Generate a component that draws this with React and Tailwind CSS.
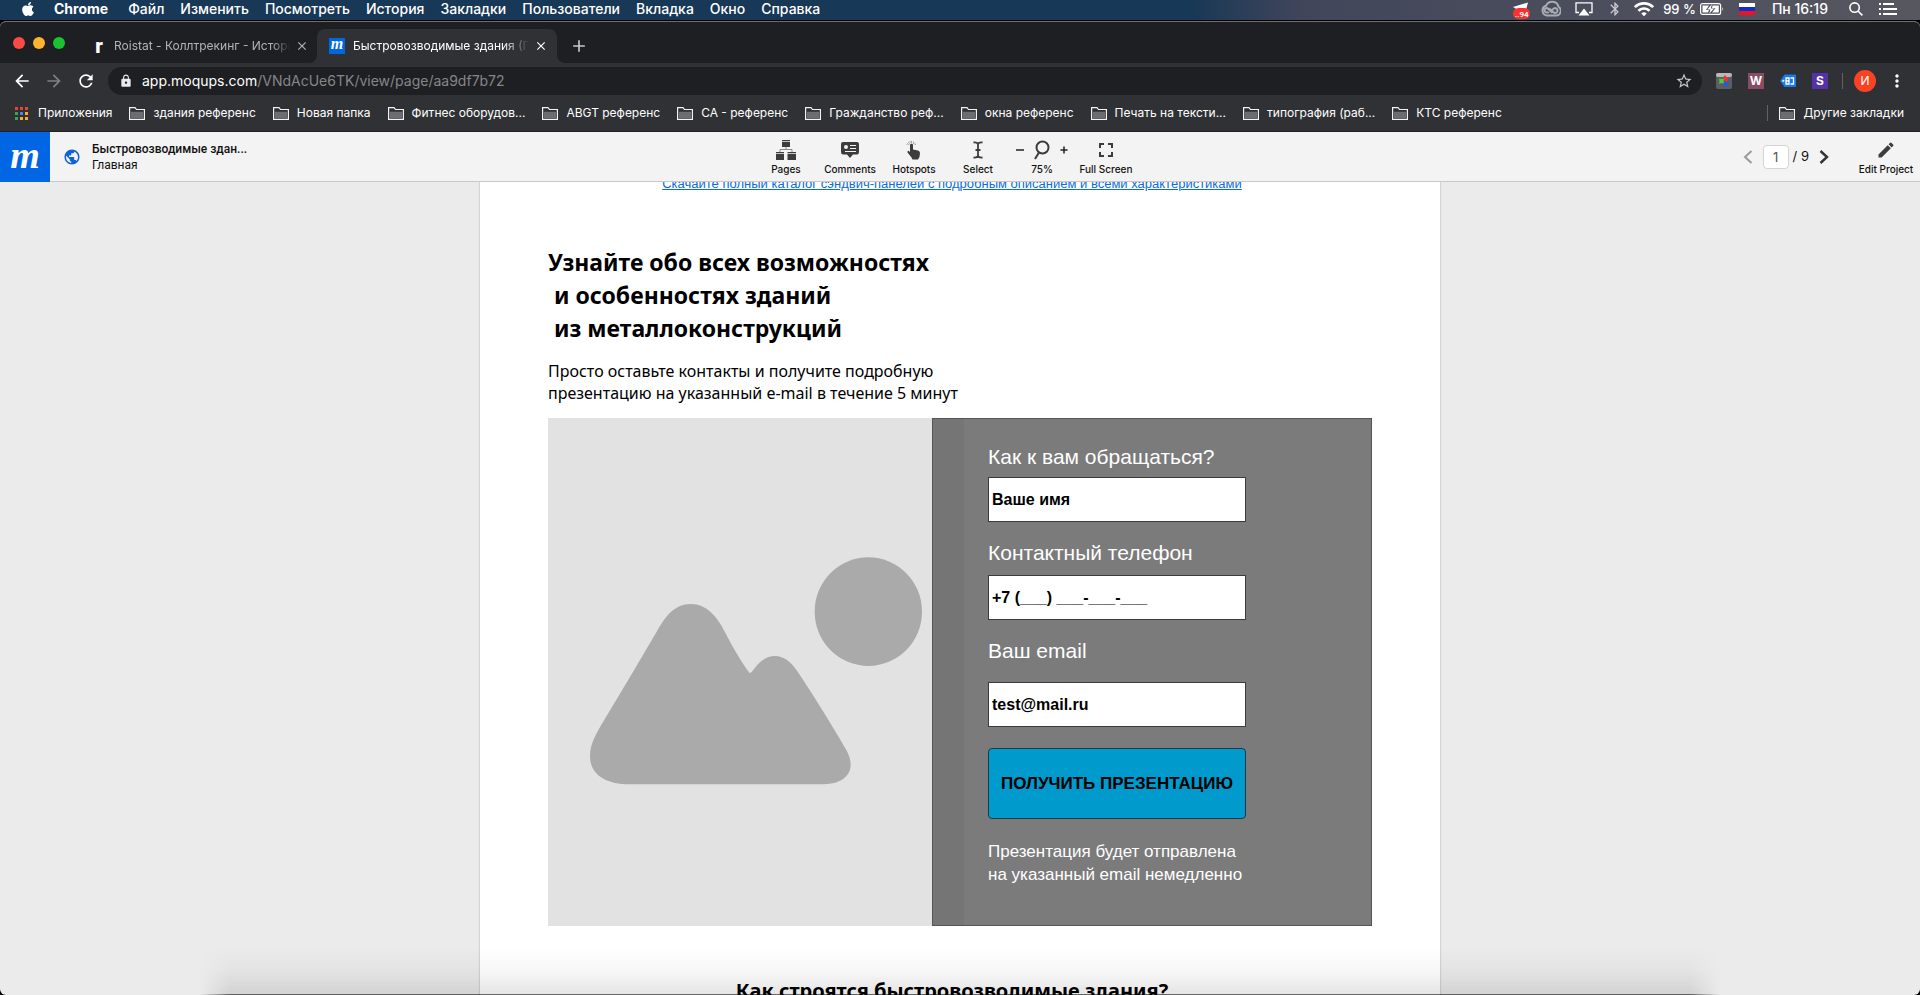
import React from 'react';
import { FaApple } from 'react-icons/fa';
import {
  MdAdd,
  MdArrowBack,
  MdArrowForward,
  MdBluetooth,
  MdClose,
  MdEdit,
  MdLock,
  MdMoreVert,
  MdPublic,
  MdRefresh,
  MdStarBorder,
  MdWifi,
} from 'react-icons/md';

const MENU = ['Файл', 'Изменить', 'Посмотреть', 'История', 'Закладки', 'Пользователи', 'Вкладка', 'Окно', 'Справка'];

const BOOKMARKS = [
  'здания референс',
  'Новая папка',
  'Фитнес оборудов...',
  'ABGT референс',
  'CA - референс',
  'Гражданство реф...',
  'окна референс',
  'Печать на тексти...',
  'типография (раб...',
  'КТС референс',
];

const APP_COLORS = [
  'bg-[#ea4335]', 'bg-[#ea4335]', 'bg-[#ea4335]',
  'bg-[#34a853]', 'bg-[#4285f4]', 'bg-[#f9ab2d]',
  'bg-[#34a853]', 'bg-[#f9ab2d]', 'bg-[#f9ab2d]',
];

const MenuBar = () => (
  <header className="h-5 pb-0.5 shrink-0 flex items-center justify-between pl-5 pr-[23px] text-white text-sm leading-5 bg-linear-to-r from-[#173856] from-62% via-[#41465a] via-68% to-[#57575f]">
    <nav className="flex items-center gap-4 font-medium">
      <FaApple className="w-4 h-4 mr-0.5" />
      <a href="#chrome" className="font-bold mr-1">Chrome</a>
      {MENU.map((item) => (
        <a key={item} href="#menu">{item}</a>
      ))}
    </nav>
    <div className="flex items-center">
      <svg className="w-[18px] h-5 mr-[11px]" viewBox="0 0 18 20">
        <path d="M1 8L16 3.500L14 11H6Z" fill="#fff" />
        <rect x="1" y="9" width="17" height="11" rx="5.5" fill="#f9322f" />
        <text x="3" y="17.5" fontSize="8" fontWeight="600" fill="#fff" fontFamily="Roboto, sans-serif">..94</text>
      </svg>
      <svg className="w-5 h-5 mr-[14px]" viewBox="0 0 20 20" fill="none" stroke="#a9abb3" strokeWidth="2">
        <path d="M5.8 16.5A5 5 0 0 1 5 6.8A6.6 6.6 0 0 1 17.6 8A4.6 4.6 0 0 1 15 16.5H5.8Z" />
        <path d="M11.5 13.8L6.5 9.2A2.2 2.2 0 0 0 4.2 12.8C5 13.9 7 13.7 7.8 12.8" />
        <path d="M8.2 9.5L13.2 13.8A2.4 2.4 0 1 0 12.8 9.5C11.6 10.3 11 11 10.5 11.6" />
      </svg>
      <svg className="w-[18px] h-4 mr-[14px]" viewBox="0 0 18 16">
        <path d="M4 11.5H1V1.8H17V11.5H14" fill="none" stroke="#fff" strokeWidth="1.3" />
        <path d="M9 7.5L14.5 14.5H3.5Z" fill="#fff" />
      </svg>
      <MdBluetooth className="w-4 h-4 mr-2.5 text-[#c9c9ce]" />
      <MdWifi className="w-[22px] h-[22px] mr-2" />
      <span className="text-[13px] font-medium mr-1">99 %</span>
      <svg className="w-6 h-3 mr-[15px]" viewBox="0 0 24 12">
        <rect x=".6" y=".6" width="20" height="10.8" rx="2" fill="none" stroke="#fff" strokeWidth="1.2" />
        <path d="M2.5 2.5H9L6 7H9L8 9.5H2.5ZM12.5 2.5H18.8V9.5H12L15.5 5.2H12Z" fill="#fff" />
        <path d="M11.8 1.2L7.3 6.4H10.4L9.2 10.8L14 5.5H10.8Z" fill="#fff" />
        <path d="M22 4Q23.5 6 22 8Z" fill="#fff" />
      </svg>
      <span className="w-4 h-3 mr-[17px] flex flex-col" aria-hidden="true">
        <span className="flex-1 bg-white" />
        <span className="flex-1 bg-[#0c2fd0]" />
        <span className="flex-1 bg-[#f5101b]" />
      </span>
      <span className="font-medium mr-[21px]">Пн 16:19</span>
      <svg className="w-[14px] h-[14px] mr-4" viewBox="0 0 14 14" fill="none" stroke="#fff" strokeWidth="1.6">
        <circle cx="5.6" cy="5.6" r="4.7" />
        <path d="M9.2 9.2L13.4 13.4" />
      </svg>
      <svg className="w-[18px] h-3" viewBox="0 0 18 12" stroke="#fff" strokeWidth="1.8">
        <path d="M0 1H2M4 1H15M0 6H2M4 6H18M0 11H2M4 11H18" />
      </svg>
    </div>
  </header>
);

// moqups favicon and app logo share this mark
const LogoMark = ({ className }) => (
  <span
    className={`flex items-center justify-center bg-[#0066e4] text-white font-bold italic font-['Liberation_Serif',serif] ${className}`}
  >
    m
  </span>
);

const TabStrip = () => (
  <div className="h-[41px] flex items-end bg-[#1e1f22] pl-[13px] text-xs">
    <div className="flex gap-2 self-center h-3 mr-[26px]">
      <span className="w-3 h-3 rounded-full bg-[#fc4a48]" />
      <span className="w-3 h-3 rounded-full bg-[#fdb32f]" />
      <span className="w-3 h-3 rounded-full bg-[#19c332]" />
    </div>
    <div className="w-[221px] h-[34px] flex items-center text-[#b0b3b8]">
      <span className="w-4 text-center text-white text-xl leading-4 font-black font-['Roboto',sans-serif]">r</span>
      <span className="ml-[7px] w-44 whitespace-nowrap overflow-hidden mask-r-from-90%">Roistat - Коллтрекинг - История</span>
      <button type="button" aria-label="Закрыть вкладку" className="ml-[5px]">
        <MdClose className="w-3.5 h-3.5" />
      </button>
    </div>
    <div className="relative w-60 h-[34px] ml-[5px] flex items-center pl-3 rounded-t-lg bg-[#303135] text-white">
      <svg className="absolute bottom-0 -left-2 w-2 h-2" viewBox="0 0 8 8"><path d="M8 0V8H0A8 8 0 0 0 8 0Z" fill="#303135" /></svg>
      <svg className="absolute bottom-0 -right-2 w-2 h-2" viewBox="0 0 8 8"><path d="M0 0V8H8A8 8 0 0 1 0 0Z" fill="#303135" /></svg>
      <LogoMark className="w-4 h-4 text-base leading-4 pb-1" />
      <span className="ml-2 w-44 whitespace-nowrap overflow-hidden mask-r-from-85%">Быстровозводимые здания (Главная)</span>
      <button type="button" aria-label="Закрыть вкладку" className="ml-[5px]">
        <MdClose className="w-3.5 h-3.5" />
      </button>
    </div>
    <button type="button" aria-label="Новая вкладка" className="h-[34px] ml-3 text-[#c4c7cb]">
      <MdAdd className="w-5 h-5" />
    </button>
  </div>
);

const AddressBar = () => (
  <div className="h-9 flex items-center pl-3 pr-[13px] bg-[#303135] text-white">
    <button type="button" aria-label="Назад"><MdArrowBack className="w-5 h-5" /></button>
    <button type="button" aria-label="Вперёд" className="ml-3 text-[#7d7e82]"><MdArrowForward className="w-5 h-5" /></button>
    <button type="button" aria-label="Обновить" className="ml-3"><MdRefresh className="w-5 h-5" /></button>
    <div className="flex-1 h-7 ml-3 flex items-center rounded-full bg-[#1e1f22] pl-[11px] pr-[9px] text-sm">
      <MdLock className="w-[14px] h-[14px] mr-[9px] text-[#e8eaed]" />
      <span>app.moqups.com</span>
      <span className="text-[#85868a]">/VNdAcUe6TK/view/page/aa9df7b72</span>
      <MdStarBorder className="w-[18px] h-[18px] ml-auto text-[#c4c7cb]" />
    </div>
    <div className="flex items-center gap-4 ml-[14px]">
      <svg className="w-4 h-4" viewBox="0 0 16 16">
        <rect width="16" height="16" rx="2" fill="#5c5f62" />
        <rect width="16" height="4" rx="2" fill="#b8babb" />
        <path d="M9 2L10.500 4L13 4.500L11.500 6.500L11 9L8.500 7.500L6.500 5Z" fill="#f2323a" />
        <path d="M3 5.500L5.500 6L8 5.500L7.500 8L8 10.500L5.500 10L3 11L3.500 8.500Z" fill="#4fc93d" />
        <path d="M9.500 8L11 9.500L13.500 10L12 11.500L11.500 14L9.500 12.500L7 13L8 10.500Z" fill="#1e5be0" />
      </svg>
      <span className="w-4 h-4 bg-[#8b4a66] text-center text-xs leading-4 font-bold">W</span>
      <svg className="w-4 h-4" viewBox="0 0 16 16">
        <path d="M4.500 1.500H15Q16 1.500 16 2.500V13Q16 14 15 14H4.500L0 8Z" fill="#1b78e8" />
        <circle cx="3.300" cy="7.800" r="1.100" fill="#fff" />
        <path d="M6 5H9V11H6ZM10.500 5H13.500V11H10.500M6 8H9" fill="none" stroke="#fff" strokeWidth="1.300" />
      </svg>
      <span className="w-4 h-4 bg-[#5632a8] text-center text-xs leading-4 font-bold">S</span>
    </div>
    <span className="w-px h-4 bg-[#606165] ml-[14px]" />
    <span className="w-[22px] h-[22px] ml-[11px] rounded-full bg-[#fb4223] text-center text-xs leading-[22px]">И</span>
    <button type="button" aria-label="Меню" className="ml-[11px]"><MdMoreVert className="w-5 h-5" /></button>
  </div>
);

const Bookmark = ({ title }) => (
  <a href="#bookmark" className="flex items-center gap-2 whitespace-nowrap">
    <svg className="w-4 h-[13px]" viewBox="0 0 16 13">
      <path d="M.6 12.400V.6H6L7.500 2.500H15.400V12.400Z" fill="none" stroke="#f1f3f4" strokeWidth="1.200" />
      <path d="M1.800 4.800H14.200V11.200H1.800Z" fill="#6c6d70" />
    </svg>
    {title}
  </a>
);

const BookmarksBar = () => (
  <div className="h-[33px] pb-[4px] flex items-center gap-[17px] pl-[15px] pr-4 bg-[#303135] border-b border-[#231f26] text-white text-xs">
    <a href="#apps" className="flex items-center gap-[10px]">
      <span className="grid grid-cols-3 gap-0.5">
        {APP_COLORS.map((color, i) => (
          <span key={i} className={`w-[3px] h-[3px] ${color}`} />
        ))}
      </span>
      Приложения
    </a>
    {BOOKMARKS.map((title) => (
      <Bookmark key={title} title={title} />
    ))}
    <span className="ml-auto flex items-center gap-[11px]">
      <span className="w-px h-4 bg-[#606165]" />
      <Bookmark title="Другие закладки" />
    </span>
  </div>
);

const ToolButton = ({ label, children }) => (
  <button type="button" className="w-16 flex flex-col items-center whitespace-nowrap">
    <span className="h-[22px] flex items-center">{children}</span>
    <span className="mt-px text-[10px] leading-[14px] font-medium">{label}</span>
  </button>
);

const ProjectHeader = () => (
  <header className="h-[50px] shrink-0 flex items-stretch bg-[#f3f3f3] border-b border-[#c9c9c9] text-[#111]">
    <div className="flex-1 flex items-center">
      <LogoMark className="w-[50px] h-[50px] text-[38px] leading-none pb-1" />
      <MdPublic className="w-[18px] h-[18px] ml-[13px] text-[#0f62dc]" />
      <div className="ml-[11px] text-xs leading-4 font-['Roboto',sans-serif]">
        <p className="font-medium">Быстровозводимые здан...</p>
        <p>Главная</p>
      </div>
    </div>
    <nav className="flex pt-[7px] pr-[26px]">
      <ToolButton label="Pages">
        <svg className="w-5 h-5" viewBox="0 0 20 20" fill="#3c3c3c">
          <path d="M6 0H14V1.300H6ZM6 2H14V7H6ZM0 12H8V13.300H0ZM0 14H8V20H0ZM11.500 12H20V13.300H11.500ZM11.500 14H20V20H11.500Z" />
          <path d="M10 7V9.500M4 12V9.500H16V12" fill="none" stroke="#8a8a8a" />
        </svg>
      </ToolButton>
      <ToolButton label="Comments">
        <svg className="w-[18px] h-[18px]" viewBox="0 0 18 18">
          <path d="M2 1H16Q18 1 18 3V11Q18 13.500 16 13.500H12L9 17L6 13.500H2Q0 13.500 0 11V3Q0 1 2 1Z" fill="#3c3c3c" />
          <circle cx="5" cy="6" r="2" fill="#f3f3f3" />
          <path d="M9 4.500H15M9 7.500H15M4 10.500H15" stroke="#f3f3f3" />
        </svg>
      </ToolButton>
      <ToolButton label="Hotspots">
        <svg className="w-4 h-5" viewBox="0 0 16 20">
          <path d="M4 4.500Q5.500 3 7 4.500V9.500L12 10.500Q14 11 14 13L13.500 17L12 19.500H6.500L5.500 17.500L1.500 12.500Q1 10.800 2.500 10.800L4 12Z" fill="#3c3c3c" />
          <path d="M1 4.500A4.500 4.500 0 0 1 9.500 4.500M2.800 4.500A2.800 2.800 0 0 1 8 4.500" fill="none" stroke="#5a5a5a" strokeDasharray="1 1.500" />
        </svg>
      </ToolButton>
      <ToolButton label="Select">
        <svg className="w-[10px] h-[18px]" viewBox="0 0 10 18" fill="none" stroke="#3c3c3c" strokeWidth="1.800">
          <path d="M.5 1.500Q4 1 5 3Q6 1 9.500 1.500M.5 16.500Q4 17 5 15Q6 17 9.500 16.500M5 3V15M2.500 9H7.500" />
        </svg>
      </ToolButton>
      <div className="w-16 flex flex-col items-center">
        <div className="h-[22px] flex items-center gap-2 text-[#222]">
          <button type="button" aria-label="Уменьшить">
            <svg className="w-2.5 h-2.5" viewBox="0 0 10 10"><path d="M1 5H9" stroke="currentColor" strokeWidth="1.500" /></svg>
          </button>
          <svg className="w-[18px] h-5" viewBox="0 0 18 20" fill="none" stroke="#3c3c3c" strokeWidth="2">
            <circle cx="9.500" cy="7.500" r="6" />
            <path d="M6 12.500L2 19" />
          </svg>
          <button type="button" aria-label="Увеличить">
            <svg className="w-2.5 h-2.5" viewBox="0 0 10 10"><path d="M1.500 5H8.500M5 1.500V8.500" stroke="currentColor" strokeWidth="1.500" /></svg>
          </button>
        </div>
        <span className="mt-px text-[10px] leading-[14px] font-medium">75%</span>
      </div>
      <ToolButton label="Full Screen">
        <svg className="w-[14px] h-[14px]" viewBox="0 0 14 14" fill="none" stroke="#3c3c3c" strokeWidth="2">
          <path d="M1 5V1H5M9 1H13V5M13 9V13H9M5 13H1V9" />
        </svg>
      </ToolButton>
    </nav>
    <div className="flex-1 flex items-center justify-end pr-0.5">
      <button type="button" aria-label="Предыдущая страница" className="text-[#9a9a9a]">
        <svg className="w-2.5 h-3.5" viewBox="0 0 10 14"><path d="M8.500 1L2 7L8.500 13" fill="none" stroke="currentColor" strokeWidth="2" /></svg>
      </button>
      <input
        type="text"
        aria-label="Страница"
        defaultValue="1"
        className="w-[26px] h-6 ml-2.5 rounded border border-[#d4d4d4] bg-white text-center text-[13px] text-[#555]"
      />
      <span className="ml-1 text-[13px]">/ 9</span>
      <button type="button" aria-label="Следующая страница" className="ml-2.5 text-[#333]">
        <svg className="w-2.5 h-3.5" viewBox="0 0 10 14"><path d="M1.500 1L8 7L1.500 13" fill="none" stroke="currentColor" strokeWidth="2.400" /></svg>
      </button>
      <div className="ml-[25px] self-start pt-[7px]">
        <ToolButton label="Edit Project">
          <MdEdit className="w-5 h-5 text-[#3c3c3c]" />
        </ToolButton>
      </div>
    </div>
  </header>
);

const Placeholder = () => (
  <svg className="w-[416px] h-[508px] shrink-0 bg-[#e2e2e2]" viewBox="24 21 1248 1524" fill="#aaa" role="img" aria-label="Изображение">
    <path d="M150 1035C150 1002 165 975 185 940L270 798L350 662C375 618 402 579 453 579C500 579 532 618 553 660C580 712 605 755 629 786C634 786 640 776 645 770C665 745 685 735 705 735C732 735 755 755 770 778C815 845 865 925 915 1010C926 1028 932 1045 932 1060C932 1095 905 1119 850 1120H270C195 1120 150 1090 150 1035Z" />
    <ellipse cx="985" cy="602" rx="161" ry="163" />
  </svg>
);

const Field = ({ id, label, value, type = 'text', className }) => (
  <div className="flex flex-col">
    <label htmlFor={id} className="text-[21px] leading-7 whitespace-nowrap">{label}</label>
    <input
      id={id}
      type={type}
      defaultValue={value}
      className={`h-[45px] px-[3px] border border-[#3b3b3b] bg-white text-black text-base font-bold ${className}`}
    />
  </div>
);

const PresentationForm = () => (
  <form className="flex-1 -ml-8 pt-6 pl-[55px] bg-[#5a5a5a]/80 border border-[#555] text-white font-['Liberation_Sans',sans-serif]">
    <div className="w-[258px] flex flex-col gap-[17px]">
      <Field id="name" label="Как к вам обращаться?" value="Ваше имя" className="mt-1.5" />
      <Field id="phone" type="tel" label="Контактный телефон" value="+7 (___) ___-___-___" className="mt-2" />
      <Field id="email" type="email" label="Ваш email" value="test@mail.ru" className="mt-[17px]" />
      <button
        type="submit"
        className="h-[71px] mt-1 rounded border border-[#1c3a46] bg-[#009acd] text-black text-[17px] font-bold whitespace-nowrap"
      >
        ПОЛУЧИТЬ ПРЕЗЕНТАЦИЮ
      </button>
      <p className="mt-1 text-[17px] leading-[23px] whitespace-nowrap">
        Презентация будет отправлена
        <br />
        на указанный email немедленно
      </p>
    </div>
  </form>
);

const App = () => {
  return (
    <div className="h-screen flex flex-col overflow-hidden bg-black font-['Inter','Roboto',sans-serif]">
      <MenuBar />
      <div className="relative flex-1 min-h-0 mt-px flex flex-col overflow-hidden rounded-md border-t border-[#6f6f6f] bg-[#ebebeb]">
        <TabStrip />
        <AddressBar />
        <BookmarksBar />
        <ProjectHeader />
        <main className="flex-1 min-h-0 overflow-hidden">
          <article className="max-w-[960px] min-h-full mx-auto -mt-2 px-[68px] bg-white text-black shadow-[0_0_2px_rgba(0,0,0,0.3)]">
            <p className="pr-4 text-center leading-5 font-['Liberation_Sans',sans-serif] text-[13px]">
              <a href="#catalog" className="text-[#0b6be6] underline whitespace-nowrap">
                Скачайте полный каталог сэндвич-панелей с подробным описанием и всеми характеристиками
              </a>
            </p>
            <h2 className="mt-[52px] whitespace-pre font-['Noto_Sans',sans-serif] font-bold text-[23px] leading-[33px]">
              {'Узнайте обо всех возможностях\n и особенностях зданий\n из металлоконструкций'}
            </h2>
            <p className="mt-[15px] font-['Noto_Sans',sans-serif] text-base leading-[22px]">
              Просто оставьте контакты и получите подробную
              <br />
              презентацию на указанный e-mail в течение 5 минут
            </p>
            <section className="mt-3.5 flex">
              <Placeholder />
              <PresentationForm />
            </section>
            <h2 className="mt-[51px] pr-4 text-center font-['Noto_Sans',sans-serif] font-bold text-xl">
              Как строятся быстровозводимые здания?
            </h2>
          </article>
        </main>
        {/* shadow cast by the dock */}
        <div className="absolute bottom-0 inset-x-[200px] h-12 pointer-events-none bg-linear-to-b from-transparent via-black/3 to-black/10 mask-x-from-98% border-b border-black/60" />
      </div>
    </div>
  );
};

export default App;
